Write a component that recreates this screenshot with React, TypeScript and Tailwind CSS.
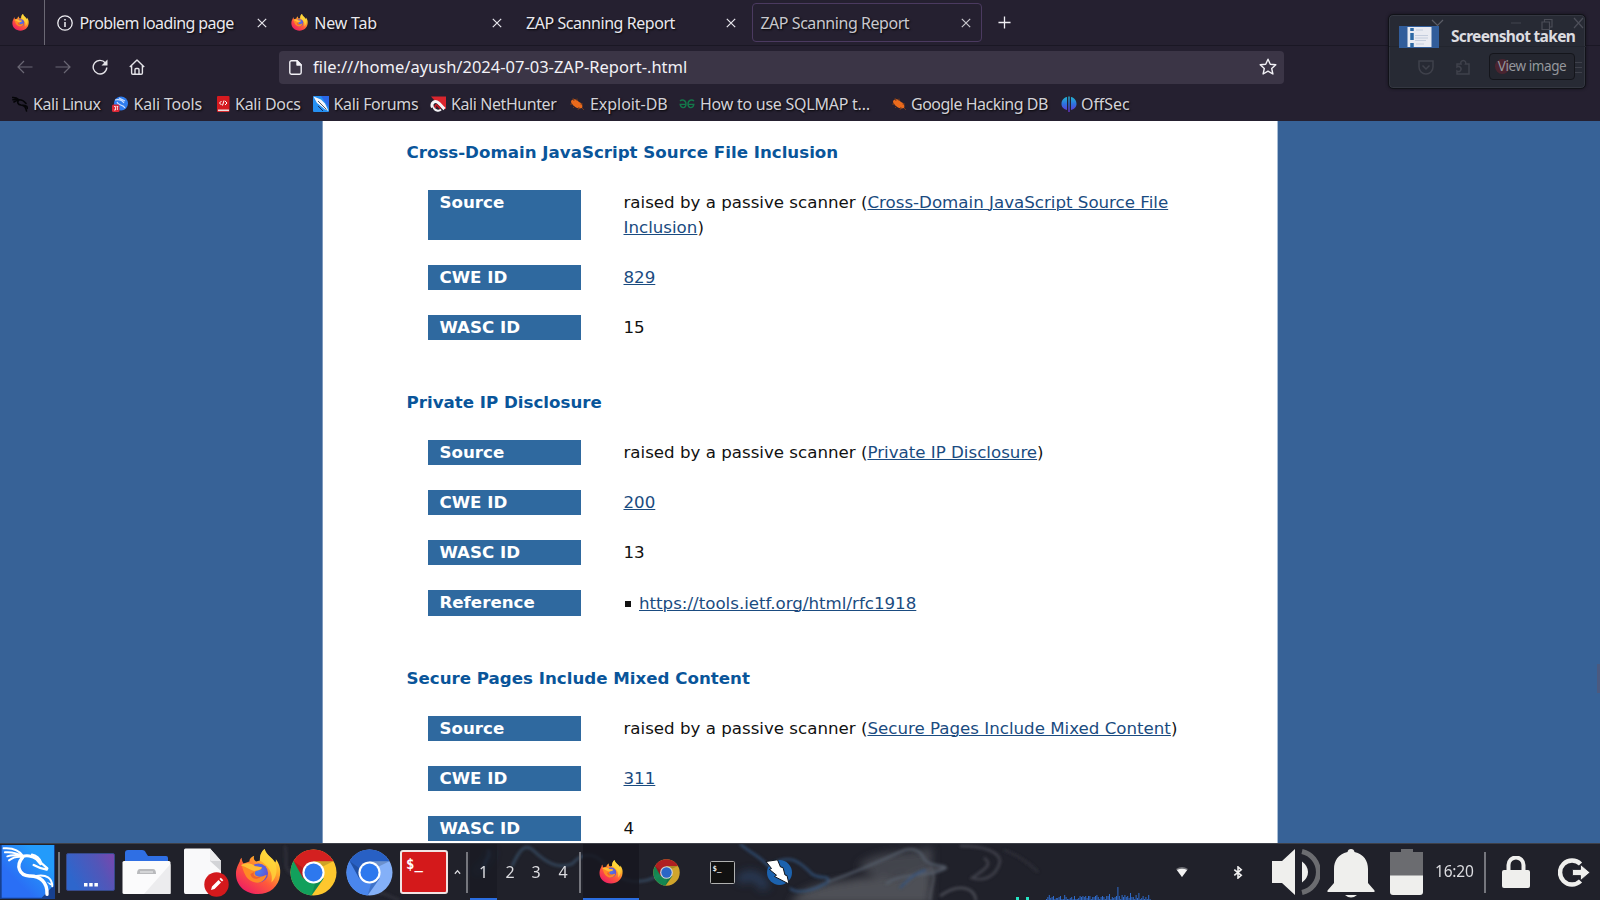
import { ReactNode } from 'react';

function Firefox({ className }: { className: string }) {
  return (
    <svg viewBox="0 0 48 48" className={className}>
      <defs>
        <linearGradient id="ff-body" x1="0.85" y1="0.05" x2="0.2" y2="0.95">
          <stop offset="0" stopColor="#fff04a" />
          <stop offset="0.3" stopColor="#ffae2a" />
          <stop offset="0.6" stopColor="#ff5a3a" />
          <stop offset="1" stopColor="#ee1f63" />
        </linearGradient>
        <radialGradient id="ff-globe" cx="0.5" cy="0.4" r="0.6">
          <stop offset="0" stopColor="#4a7ff0" />
          <stop offset="1" stopColor="#6a48c8" />
        </radialGradient>
      </defs>
      <path d="M7 9 C7 12 8 14 9 15 L15 13 C15 10 17 8 20 7 C19 10 20 12 22 13 L26 12 C26 7 27 3 31 0 C32 6 39 9 42 14 C43 13 43 11 42 10 C46 15 48 20 47 27 C46 39 36 47 24 47 C11 47 1 38 1 26 C1 20 4 15 5 13 C5 11 6 10 7 9 Z" fill="url(#ff-body)" />
      <path d="M26 12 C26 7 27 3 31 0 C32 6 39 9 42 15 C45 22 43 30 38 35 C40 26 36 18 26 12 Z" fill="#ffd93b" opacity="0.75" />
      <circle cx="24.5" cy="25" r="10" fill="url(#ff-globe)" />
      <path d="M7 17 C11 14 17 15 21 18 L28 19 C28 22 24 22 22 23 C19 25 21 29 26 29 C29 29 31 27 33 27 C31 34 24 37 18 34 C11 31 9 24 7 17 Z" fill="#ff8a25" />
      <path d="M6 17 C10 14 17 14 21 18 L28 19 C28 22 22 22 20 23 C16 22 12 19 6 17 Z" fill="#ffbf36" />
      <path d="M20 24 C18 28 22 30 27 29 C22 33 17 31 16 26 Z" fill="#f0622f" />
    </svg>
  );
}

function ChromeLogo({ className, colors }: { className: string; colors: [string, string, string, string] }) {
  const [top, left, right, core] = colors;
  return (
    <svg viewBox="0 0 48 48" className={className}>
      <circle cx="24" cy="24" r="23.5" fill={right} />
      <path d="M24 24 L3.6 12.3 A23.5 23.5 0 0 0 22 47.4 L34.4 30 Z" fill={left} />
      <path d="M24 24 L13.6 30 L3.6 12.3 A23.5 23.5 0 0 1 44.5 12.5 L24 12.5 Z" fill={top} />
      <path d="M24 12.5 H44.4 L34 17.5 Z" fill="#000" opacity="0.18" />
      <path d="M22 47.4 L34.4 30 L26 34 Z" fill="#000" opacity="0.14" />
      <path d="M3.6 12.3 L13.6 30 L14 20 Z" fill="#000" opacity="0.16" />
      <circle cx="24" cy="24" r="11.3" fill="#fff" />
      <circle cx="24" cy="24" r="9.2" fill={core} />
    </svg>
  );
}

function Close({ className }: { className: string }) {
  return (
    <svg viewBox="0 0 10 10" className={className} stroke="currentColor" strokeWidth="1.2" fill="none">
      <path d="M0.8 0.8 L9.2 9.2 M9.2 0.8 L0.8 9.2" />
    </svg>
  );
}

function Tab({ icon, label, labelClass, active }: { icon?: ReactNode; label: string; labelClass: string; active?: boolean }) {
  return (
    <div className={active ? 'mr-1 box-border flex h-[39px] w-[230.3px] items-center rounded-[4px] border border-[#4b3a60] pl-[7px] text-[#c9c8ce]' : 'mr-1 flex h-[39px] w-[230.3px] items-center pl-2 text-[#e9e8ee]'}>
      {icon}
      <span className={labelClass}>{label}</span>
      <Close className={active ? 'ml-auto mr-[10.5px] size-[10px]' : 'ml-auto mr-3 size-[10px]'} />
    </div>
  );
}

function TabStrip() {
  return (
    <div className="flex h-[46px] items-center border-b border-[#1a1724] text-[16px] [text-shadow:1px_1px_2px_rgba(0,0,0,0.9)]">
      <div className="flex h-[45px] w-[45px] items-center justify-center border-r border-[#6b6874] pr-[3px]">
        <Firefox className="size-[17px]" />
      </div>
      <div className="w-1" />
      <Tab
        icon={
          <svg viewBox="0 0 16 16" className="mr-[6.5px] size-4 shrink-0" fill="none" stroke="#f0eff4" strokeWidth="1.3">
            <circle cx="8" cy="8" r="7.2" />
            <path d="M8 7 V12 M8 4 V5.6" strokeWidth="1.5" />
          </svg>
        }
        label="Problem loading page"
        labelClass="tracking-[-0.6px]"
      />
      <Tab icon={<Firefox className="mr-1.5 size-[17px]" />} label="New Tab" labelClass="tracking-[-0.2px]" />
      <Tab label="ZAP Scanning Report" labelClass="ml-[0.5px] tracking-[-0.45px]" />
      <Tab label="ZAP Scanning Report" labelClass="ml-[0.5px] tracking-[-0.45px]" active />
      <svg viewBox="0 0 14 14" className="ml-3 size-[13px]" stroke="#f0eff4" strokeWidth="1.4">
        <path d="M7 0.5 V13.5 M0.5 7 H13.5" />
      </svg>
    </div>
  );
}

function NavBar() {
  return (
    <div className="flex h-[42px] items-center">
      <div className="flex w-[278.5px] items-center pl-[17px] text-[#e4e3e8]">
        <svg viewBox="0 0 16 16" className="size-4 text-[#6a6774]" fill="none" stroke="currentColor" strokeWidth="1.2">
          <path d="M15.5 8 H1 M7 2 L1 8 L7 14" />
        </svg>
        <svg viewBox="0 0 16 16" className="ml-[22px] size-4 text-[#6a6774]" fill="none" stroke="currentColor" strokeWidth="1.2">
          <path d="M0.5 8 H15 M9 2 L15 8 L9 14" />
        </svg>
        <svg viewBox="0 0 16 16" className="ml-[21px] size-4" fill="none" stroke="currentColor" strokeWidth="1.4">
          <path d="M13.4 4 A6.8 6.8 0 1 0 14.8 8.5" />
          <path d="M15.5 0.5 V6.5 H9.5 Z" fill="currentColor" stroke="none" />
        </svg>
        <svg viewBox="0 0 16 16" className="ml-[21px] size-4" fill="none" stroke="currentColor" strokeWidth="1.4" strokeLinejoin="round">
          <path d="M0.8 8 L8 1 L15.2 8 M2.6 6.8 V14 a1.2 1.2 0 0 0 1.2 1.2 H12.2 a1.2 1.2 0 0 0 1.2 -1.2 V6.8" />
          <path d="M6 15 V10.5 a1 1 0 0 1 1 -1 h2 a1 1 0 0 1 1 1 V15" />
        </svg>
      </div>
      <div className="flex h-[33px] w-[1005.5px] items-center rounded-[4px] bg-[#3b3546] pl-[10px] text-[#f2f1f6]">
        <svg viewBox="0 0 13 15" className="h-[15px] w-[13px]" fill="none" stroke="currentColor" strokeWidth="1.4" strokeLinejoin="round">
          <path d="M8 0.8 H2.4 A1.6 1.6 0 0 0 0.8 2.4 V12.6 A1.6 1.6 0 0 0 2.4 14.2 H10.6 A1.6 1.6 0 0 0 12.2 12.6 V5 Z" />
          <path d="M8 0.8 V5 H12.2 Z" fill="currentColor" />
        </svg>
        <span className="ml-[11.5px] text-[16.5px]">file:///home/ayush/2024-07-03-ZAP-Report-.html</span>
        <svg viewBox="0 0 18 18" className="mr-[7px] ml-auto size-[18px]" fill="none" stroke="currentColor" strokeWidth="1.4" strokeLinejoin="round">
          <path d="M9 1.2 L11.3 6.2 L16.8 6.8 L12.7 10.5 L13.9 16 L9 13.2 L4.1 16 L5.3 10.5 L1.2 6.8 L6.7 6.2 Z" />
        </svg>
      </div>
    </div>
  );
}

function Bug() {
  return (
    <svg viewBox="0 0 16 16" className="size-4">
      <path d="M2 5 C4 2 8 3 10 6 C13 7 14 10 13 12 C10 13 7 12 5 10 C3 9 2 7 2 5 Z" fill="#ea6a1c" />
      <path d="M4 2 L5 5 M8 2.5 L8 5 M1 8 L4 8.5 M4 12 L6 10 M9 14 L10 11 M14 8 L11.5 8 M13 12 L15 14" stroke="#7c3c18" strokeWidth="0.9" />
    </svg>
  );
}

function Bookmarks() {
  return (
    <div className="flex h-[33px] items-center pb-px pl-3 text-[16px] text-[#d3d2d8] [text-shadow:1px_1px_2px_rgba(0,0,0,0.9)]">
      <div className="flex w-[100px] items-center gap-[5px]">
        <svg viewBox="0 0 16 16" className="size-4" fill="none" stroke="#050508" strokeWidth="1.6" strokeLinecap="round">
          <path d="M0.5 1.5 C3 1.3 5 2 6.5 3.5 M1 3.8 C3 3.2 5 3.4 6.5 4 M2 6 C4 4.6 5 4.5 6.5 4.2 M6.5 3.8 C10 3.5 12 5 14 7.5 M6.5 4.2 C5 6.5 6 8.5 9 9 C12 9.3 14 11 14.5 15 M11 9.4 C14 9.5 15.5 11 15.6 12.5" />
        </svg>
        <span className="tracking-[-0.46px]">Kali Linux</span>
      </div>
      <div className="flex w-[104px] items-center gap-[5px]">
        <svg viewBox="0 0 16 16" className="size-4">
          <circle cx="9" cy="7.5" r="7" fill="#2f7df0" />
          <path d="M3 4 C7 3 10 4 12 7 M5 6 C6 10 11 8 13 12 M7 2 L13 5" stroke="#cfe2ff" strokeWidth="1.1" fill="none" />
          <rect x="0" y="8.5" width="7.5" height="7.5" rx="1.5" fill="#dc2836" />
          <path d="M2 10.5 H3.5 V14 H2 M5.4 10.5 V14 M4.6 10.5 H6.2" stroke="#fff" strokeWidth="0.8" fill="none" />
        </svg>
        <span className="ml-[0.5px] tracking-[-0.17px]">Kali Tools</span>
      </div>
      <div className="flex w-[97px] items-center gap-[5px]">
        <svg viewBox="0 0 14 16" className="h-4 w-[14px]">
          <rect x="1" y="0" width="12.5" height="16" rx="1" fill="#d61a1f" />
          <rect x="2" y="13.5" width="11" height="1.6" fill="#ecdede" />
          <path d="M5.5 5 L3.5 7 L5.5 9 M9 5 L11 7 L9 9 M8 4.5 L6.5 9.5" stroke="#fff" strokeWidth="1" fill="none" />
        </svg>
        <span className="tracking-[-0.27px]">Kali Docs</span>
      </div>
      <div className="flex w-[117px] items-center gap-[4.5px]">
        <svg viewBox="0 0 16 16" className="size-4">
          <rect width="16" height="16" rx="1" fill="#2590f2" />
          <path d="M8 0 H16 V12 Z" fill="#2a68e8" />
          <path d="M0.5 0.5 L8 3.5 L12 7.5 L15.5 15 L11.5 13 L8.5 10.5 L4 7 Z" fill="#f6f7fa" />
          <path d="M5 5 L13.5 13.5" stroke="#3b4457" strokeWidth="0.9" />
          <path d="M5 10 L10 15" stroke="#14305e" strokeWidth="1" />
        </svg>
        <span className="tracking-[-0.33px]">Kali Forums</span>
      </div>
      <div className="flex w-[139px] items-center gap-[5px]">
        <svg viewBox="0 0 16 16" className="size-4">
          <path d="M1 0.500 H16 V13 L14 13 L5 5 Z" fill="#d9252d" />
          <path d="M2.500 11.500 C0.500 6.500 5 4 8.500 6.800 C10.500 8.500 11.500 10.500 14.500 13" stroke="#f4f4f6" strokeWidth="3" fill="none" />
          <path d="M3.500 11 C4.500 15 9 15.500 11 13.500" stroke="#f4f4f6" strokeWidth="2" fill="none" />
          <path d="M5.500 12 C4.500 9 6 8 8 10 L10.500 12.500" stroke="#c01820" strokeWidth="1.800" fill="none" />
        </svg>
        <span className="tracking-[-0.42px]">Kali NetHunter</span>
      </div>
      <div className="flex w-[110px] items-center gap-[5px]">
        <Bug />
        <span className="tracking-[-0.05px]">Exploit-DB</span>
      </div>
      <div className="flex w-[212px] items-center gap-[5px]">
        <svg viewBox="0 0 16 16" className="size-4" fill="none" stroke="#14774a" strokeWidth="1.4">
          <path d="M1 5 C3 3 7 4 7 8 C7 12.5 2 13 1.2 8.4 H7 M15 5 C13 3 9 4 9 8 C9 12.5 14 13 14.8 8.4 H9" />
        </svg>
        <span className="tracking-[-0.25px]">How to use SQLMAP t…</span>
      </div>
      <div className="flex w-[170px] items-center gap-1">
        <Bug />
        <span className="tracking-[-0.5px]">Google Hacking DB</span>
      </div>
      <div className="flex items-center gap-1">
        <svg viewBox="0 0 16 16" className="size-4">
          <defs>
            <linearGradient id="offsec" x1="0" y1="0" x2="0" y2="1">
              <stop offset="0" stopColor="#22b8cf" />
              <stop offset="0.5" stopColor="#2f6fe0" />
              <stop offset="1" stopColor="#6a2fd0" />
            </linearGradient>
          </defs>
          <path d="M6 1 V14 C2 13 0.5 10.5 0.5 8 C0.5 4 3 1.7 6 1 Z M10 1 V14 C14 13 15.5 10.5 15.5 8 C15.5 4 13 1.7 10 1 Z M7.3 0.5 H8.7 V16 H7.3 Z" fill="url(#offsec)" />
        </svg>
        <span className="tracking-[-0.08px]">OffSec</span>
      </div>
    </div>
  );
}

function Notification() {
  return (
    <div className="absolute top-[13.5px] left-[1387.5px] h-[75px] w-[198.5px] rounded-[5px] border border-[#111218] bg-[#272a34] shadow-[inset_0_0_0_1px_#343741,0_0_3px_#15131c]">
      <svg viewBox="0 0 199 75" className="absolute -top-px -left-px h-[75px] w-[199px]" fill="none" stroke="#3f414b" strokeWidth="1.2">
        <path d="M1 32.500 H198" stroke="#22252e" />
        <path d="M44 6 L49.500 11.500 L55 6" stroke="#5c5e67" />
        <path d="M123 9 H133" />
        <path d="M154 8 H161.500 V15.500 H154 Z M156.500 8 V5.500 H164 V13 H161.500" stroke="#4b4d57" />
        <path d="M186 4 L195 14 M195 4 L186 14" stroke="#4d4f59" />
        <path d="M31 47 H45 V53 A7 7 0 0 1 31 53 Z M34.500 51.500 L38 55 L41.500 51.500" strokeWidth="1.500" />
        <path d="M69 60 H81 V50 H77.500 A2.500 2.500 0 1 0 73 50 H69 V53 A2.500 2.500 0 1 1 69 57 Z" strokeWidth="1.500" />
        <path d="M180 48.500 H194 M180 53.500 H194 M180 58.500 H194" />
      </svg>
      <div className="relative flex items-center gap-3 pt-[9px] pl-[10.5px]">
        <svg viewBox="0 0 40 22" className="mt-[2px] h-[22px] w-10">
          <rect width="40" height="22" fill="#315d9b" />
          <rect x="8.500" y="1" width="24" height="20" fill="#e9ebf2" />
          <path d="M13 2 V5 M13 7 V14 M13 17 V21" stroke="#2d69a5" strokeWidth="3.500" />
          <path d="M17 4 H24 M16 9.500 H29 M16 12 H29 M16 14.500 H27 M17 18 H25" stroke="#c0c9da" strokeWidth="0.900" />
        </svg>
        <span className="text-[15.5px] leading-6 font-bold tracking-[-0.68px] whitespace-nowrap text-[#dcdce0]">Screenshot taken</span>
      </div>
      <div className="relative mt-[5px] ml-[100.5px] flex h-[27px] w-[86px] items-center justify-center rounded-[4px] border border-[#14151b] bg-[#24262f]">
        <svg viewBox="0 0 86 27" className="absolute inset-0 h-full w-full">
          <circle cx="11" cy="13.500" r="8" fill="#4a2430" />
          <circle cx="48" cy="13.500" r="5" fill="#1c2b2d" />
        </svg>
        <span className="relative text-[13.5px] tracking-[-0.42px] text-[#95979d]">View image</span>
      </div>
    </div>
  );
}

type Row = { name: string; value: ReactNode; tall?: boolean };

function Link({ children }: { children: ReactNode }) {
  return <a className="text-[#1a4b80] underline decoration-1 underline-offset-1">{children}</a>;
}

function Section({ title, rows }: { title: string; rows: Row[] }) {
  return (
    <section className="mb-[50px]">
      <h4 className="mb-[25px] ml-[83.5px] h-[25px] font-bold text-[#09559a]">{title}</h4>
      <div className="ml-[105px] flex flex-col gap-[25px]">
        {rows.map((r) => (
          <div key={r.name} className={r.tall ? 'flex min-h-[26px]' : 'flex min-h-[25px]'}>
            <div className="w-[153px] bg-[#2f699f] pl-[11.5px] font-bold text-white">{r.name}</div>
            <div className="ml-[42.5px] w-[570px]">{r.value}</div>
          </div>
        ))}
      </div>
    </section>
  );
}

function Report() {
  return (
    <main className="relative flex h-[722px] justify-center overflow-hidden bg-[#376297] whitespace-normal">
      <div className="h-full w-[956px] border-x border-r-[#a9bed6] border-l-[#7f9bbe] bg-white pt-[19px] font-['DejaVu_Sans',sans-serif] text-[16.667px] leading-[25px] text-[#111]">
        <Section
          title="Cross-Domain JavaScript Source File Inclusion"
          rows={[
            { name: 'Source', value: <>raised by a passive scanner (<Link>Cross-Domain JavaScript Source File Inclusion</Link>)</> },
            { name: 'CWE ID', value: <Link>829</Link> },
            { name: 'WASC ID', value: '15' },
          ]}
        />
        <Section
          title="Private IP Disclosure"
          rows={[
            { name: 'Source', value: <>raised by a passive scanner (<Link>Private IP Disclosure</Link>)</> },
            { name: 'CWE ID', value: <Link>200</Link> },
            { name: 'WASC ID', value: '13' },
            {
              name: 'Reference',
              tall: true,
              value: (
                <div className="flex items-center pt-px">
                  <span className="mr-2 ml-[1.5px] size-[6px] bg-[#111]" />
                  <Link>https://tools.ietf.org/html/rfc1918</Link>
                </div>
              ),
            },
          ]}
        />
        <Section
          title="Secure Pages Include Mixed Content"
          rows={[
            { name: 'Source', value: <>raised by a passive scanner (<Link>Secure Pages Include Mixed Content</Link>)</> },
            { name: 'CWE ID', value: <Link>311</Link> },
            { name: 'WASC ID', value: '4' },
          ]}
        />
      </div>
      <div className="absolute top-[543px] right-0 h-[29px] w-[3px] bg-[#4b5a80]" />
    </main>
  );
}

function Wallpaper() {
  return (
    <svg viewBox="0 0 1600 57" className="absolute inset-0 h-[57px] w-[1600px]" fill="none">
      <defs>
        <filter id="soft" x="-10%" y="-50%" width="120%" height="200%">
          <feGaussianBlur stdDeviation="1.5" />
        </filter>
        <filter id="haze" x="-20%" y="-50%" width="140%" height="200%">
          <feGaussianBlur stdDeviation="4" />
        </filter>
      </defs>
      <g filter="url(#haze)">
        <path d="M790 60 C800 42 830 38 850 36 C870 30 890 38 905 30 L932 22 L930 60 Z" fill="#5b5c63" opacity="0.8" />
        <path d="M858 22 C880 2 915 12 932 2 L932 22 L880 36 Z" fill="#53545c" opacity="0.7" />
        <path d="M740 38 C745 28 760 30 765 45" stroke="#2f5482" strokeWidth="10" opacity="0.5" />
        <path d="M475 30 C482 20 492 16 490 6" stroke="#1f4468" strokeWidth="6" opacity="0.5" />
      </g>
      <g filter="url(#soft)" strokeWidth="2.2">
        <path d="M512 22 C520 5 525 -2 535 8 C550 22 560 24 572 20 C582 8 596 8 606 22 C622 40 640 42 662 30" stroke="#3c5570" opacity="0.9" />
        <path d="M484 28 C482 16 492 14 488 6" stroke="#3b6a9c" opacity="0.6" />
        <path d="M740 0 C752 10 762 14 768 22 C790 8 800 18 812 30 C820 36 830 30 828 38 C812 48 795 50 790 44" stroke="#345c8c" opacity="0.8" />
        <path d="M828 38 C850 30 870 22 900 8 C912 2 920 6 925 16 C932 24 945 20 946 24 C930 34 900 28 886 40" stroke="#56606e" opacity="0.9" />
        <path d="M960 2 C985 2 1000 8 1000 18 C996 32 985 38 972 34 C984 26 994 20 984 14" stroke="#4a4b55" opacity="0.9" />
        <path d="M905 40 C918 26 930 24 946 24 M930 57 C930 42 938 34 930 22 M940 52 C960 38 975 44 976 57" stroke="#5a5c66" opacity="0.8" />
        <path d="M900 44 C908 36 916 28 926 26" stroke="#2c5286" opacity="0.8" />
        <path d="M1004 6 C1020 12 1030 20 1038 28" stroke="#30313a" />
        <path d="M285 2 C288 16 282 24 292 30 M370 50 C385 46 390 54 400 56" stroke="#3a3c46" opacity="0.7" />
      </g>
    </svg>
  );
}

function Divider() {
  return <div className="h-[41px] w-[2px] bg-[#75767d]" />;
}

const spectrum = [1, 3, 5, 2, 3, 4, 1, 2, 2, 3, 4, 1, 1, 5, 3, 1, 1, 2, 3, 1, 4, 1, 1, 2, 4, 3, 4, 3, 4, 2, 4, 4, 1, 3, 3, 4, 5, 3, 1, 3, 4, 3, 1, 4, 4, 6, 1, 3, 2, 3, 4, 13, 4, 1, 5, 3, 5, 3, 4, 2, 7, 3, 3, 1, 5, 2, 7, 1, 2, 4, 1, 3, 1, 5, 1];

function Taskbar() {
  return (
    <footer className="relative flex h-[57px] items-center overflow-hidden border-t border-[#3e4048] bg-[#20212a] font-['Noto_Sans',sans-serif] text-[16px] text-[#dcdce0]">
      <Wallpaper />
      <div className="relative flex h-full w-full items-center">
        <div className="w-[55px]">
          <svg viewBox="0 0 165 162" className="h-[54px] w-[55px]">
            <defs>
              <linearGradient id="tile" x1="0" y1="1" x2="1" y2="0">
                <stop offset="0.3" stopColor="#2a6ff5" />
                <stop offset="0.75" stopColor="#239bfb" />
              </linearGradient>
            </defs>
            <rect width="165" height="162" fill="#17408f" />
            <path d="M5 0 H162 V120 L125 158 H5 Z" fill="url(#tile)" />
            <g fill="none" stroke="#fff" strokeLinecap="round" strokeLinejoin="round">
              <path d="M11 10 C35 8 58 16 70 34 M15 22 C35 20 55 26 70 35 M22 34 C38 29 55 31 68 35 M27 46 C40 36 55 34 68 36" strokeWidth="6" />
              <path d="M66 36 C78 29 98 33 110 42 L122 56" strokeWidth="9" />
              <path d="M96 29 C108 30 120 42 124 54 L142 70 L140 74 C126 72 112 66 101 60" strokeWidth="7" />
              <path d="M68 37 C46 62 58 92 88 93 C120 92 143 112 141 148" strokeWidth="10" />
              <path d="M108 93 C140 88 156 98 157 124" strokeWidth="6" />
            </g>
            <path d="M140 110 L158 118 L151 121 Z" fill="#fff" />
          </svg>
        </div>
        <div className="flex w-2 justify-center"><Divider /></div>
        <div className="flex w-[55px] justify-center">
          <svg viewBox="0 0 49 38" className="h-[38px] w-[49px]">
            <defs>
              <linearGradient id="desk" x1="0" y1="0.4" x2="1" y2="0">
                <stop offset="0" stopColor="#2e66cc" />
                <stop offset="0.6" stopColor="#5356b8" />
                <stop offset="1" stopColor="#7b46ad" />
              </linearGradient>
            </defs>
            <rect x="0.500" y="0.500" width="48" height="37" rx="1.500" fill="url(#desk)" stroke="#364a8c" />
            <path d="M18 30 h3.500 v3.500 h-3.500 Z M23.200 30 h3.500 v3.500 h-3.500 Z M28.400 30 h3.500 v3.500 h-3.500 Z" fill="#fff" />
          </svg>
        </div>
        <div className="flex w-[57px] justify-center">
          <svg viewBox="0 0 49 44" className="mr-px h-[44px] w-[49px]">
            <path d="M3 3 Q3 0 6 0 H20 Q23 0 24 3 L26 6 H44 Q46 6 46 8 V16 H3 Z" fill="#2f6fe4" />
            <rect x="0.500" y="11" width="48" height="33" rx="1.500" fill="#fbfbfc" />
            <path d="M48.500 14 V44 H22 Z" fill="#ececee" />
            <path d="M15 24 Q15 19 18 19 H31 Q34 19 34 24 Z" fill="#b9babd" />
            <path d="M18 22 H31" stroke="#dedee0" strokeWidth="1.500" />
          </svg>
        </div>
        <div className="flex w-[55px] justify-end">
          <svg viewBox="0 0 45 49" className="mt-px mr-px h-[49px] w-[45px]">
            <path d="M1.500 0.500 H26 L37 13 V46 H1.500 Q0 46 0 44 V2 Q0 0.500 1.500 0.500 Z" fill="#f9f9fa" />
            <path d="M26 0.500 L37 13 V23 L26 13 Z" fill="#d3d4d7" />
            <path d="M26 0.500 L37 13 H27 Q26 13 26 11 Z" fill="#ececee" />
            <circle cx="32.500" cy="36.500" r="12.200" fill="#d3191c" />
            <path d="M27 42 L28 38.500 L34.500 32 L37 34.500 L30.500 41 Z M35.500 31 L36.800 29.700 L39.300 32.200 L38 33.500 Z" fill="#fff" />
          </svg>
        </div>
        <div className="flex w-[56px] justify-center"><Firefox className="mr-px size-[46px]" /></div>
        <div className="flex w-[55px] justify-center">
          <ChromeLogo className="size-[47px]" colors={['#d42020', '#12a05c', '#fdc72e', '#2d78ee']} />
        </div>
        <div className="flex w-[56px] justify-center">
          <ChromeLogo className="size-[47px]" colors={['#2860c4', '#4a86ec', '#84b0f8', '#2d78ee']} />
        </div>
        <div className="flex w-[54px] justify-center">
          <div className="flex h-[44px] w-[48px] rounded-[3px] border-2 border-[#f0e4e4] bg-[#d4191b] pt-[3px] pl-[4px]">
            <span className="font-['DejaVu_Sans_Mono',monospace] text-[14px] leading-[18px] font-bold text-white">$_</span>
          </div>
        </div>
        <div className="flex w-[13px] justify-center">
          <svg viewBox="0 0 8 6" className="h-[6px] w-[7px]" fill="none" stroke="#dcdce0" strokeWidth="1.500"><path d="M1 5 L4 1.500 L7 5" /></svg>
        </div>
        <div className="flex w-[6px] justify-center"><Divider /></div>
        <div className="flex h-full w-[27px] items-center justify-center border-b-2 border-[#2a6de0] bg-[#181922]/70 pt-[2px]">1</div>
        <div className="flex w-[26px] justify-center">2</div>
        <div className="flex w-[27px] justify-center pr-px">3</div>
        <div className="flex w-[27px] justify-center pr-px">4</div>
        <div className="flex w-[6px] justify-center"><Divider /></div>
        <div className="flex h-full w-[56px] items-center justify-center border-b-2 border-[#2a6de0] bg-[#16171f]/80 pt-[2px]">
          <Firefox className="size-6" />
        </div>
        <div className="flex w-[55px] justify-center">
          <ChromeLogo className="size-[27px] opacity-80" colors={['#d42020', '#12a05c', '#fdc72e', '#2d78ee']} />
        </div>
        <div className="flex w-[56px] justify-center">
          <div className="flex h-[23px] w-[25px] rounded-[1.5px] border-[1.5px] border-[#b0b1b0] bg-[#111] pt-px pl-[2px]">
            <span className="font-['DejaVu_Sans_Mono',monospace] text-[7.5px] leading-[12px] font-bold text-[#e8e8e8]">$_</span>
          </div>
        </div>
        <div className="flex w-[57px] justify-center">
          <svg viewBox="0 0 27 27" className="mr-px size-[27px]">
            <circle cx="14.500" cy="13.500" r="12.500" fill="#1c62ae" />
            <path d="M1 2.500 L12.500 0.800 L15.500 8 L18 8.500 L20 16 L22 16.500 L24 25 L9.500 17.500 L11.500 16.200 L4.500 10.500 L6.500 9.500 Z" fill="#fff" stroke="#10141c" strokeWidth="1" strokeLinejoin="round" />
          </svg>
        </div>
        <div className="ml-[209px] flex h-full w-[137px] items-end">
          <div className="h-[3px] w-[3px] bg-[#25e6c4]" />
          <div className="ml-[7px] h-[3px] w-[3px] bg-[#25e6c4]" />
          <svg viewBox="0 0 106 14" className="ml-[17px] h-[14px] w-[106px]" fill="#2f6bcb">
            {spectrum.map((v, i) => <rect key={i} x={i * 1.4} y={14 - v} width="1" height={v} />)}
          </svg>
        </div>
        <svg viewBox="0 0 12 12" className="ml-[23px] size-3">
          <path d="M0 3 Q6 -1 12 3 L6 11 Z" fill="#6e6f75" />
          <path d="M0.900 4 Q6 1.500 11.100 4 L6 11 Z" fill="#f2f2f2" />
        </svg>
        <svg viewBox="0 0 10 14" className="ml-[45px] h-[13px] w-[10px]" fill="none" stroke="#f0f0f0" strokeWidth="1.700">
          <path d="M1 4 L8.500 10 L5 13 V1 L8.500 4 L1 10" />
        </svg>
        <svg viewBox="0 0 48 46" className="ml-[29px] h-[46px] w-[48px]">
          <path d="M0 12 H10 L23 0 V46 L10 34 H0 Z" fill="#efefed" />
          <path d="M30 12.500 Q36 17 36 23 Q36 29 30 33.500 Z" fill="#efefed" />
          <path d="M30 2.500 A21 21 0 0 1 30 43.500" fill="none" stroke="#6b6c70" strokeWidth="5" />
        </svg>
        <svg viewBox="0 0 48 49" className="mt-[3px] ml-[7px] h-[49px] w-[48px]" fill="#efefed">
          <path d="M24 0 Q27 0 27.500 3 C37 5 41 12 41 20 V34 L47.500 41.500 V43 H0.500 V41.500 L7 34 V20 C7 12 11 5 20.500 3 Q21 0 24 0 Z" />
          <path d="M18 46 H30 Q24 51 18 46 Z" />
        </svg>
        <svg viewBox="0 0 33 46" className="ml-[15px] h-[46px] w-[33px]">
          <path d="M11 0 H23 V3 H33 V27 H0 V3 H11 Z" fill="#6b6c70" />
          <path d="M0 26.500 H33 V43 Q33 46 30 46 H3 Q0 46 0 43 Z" fill="#efefed" />
        </svg>
        <span className="ml-3 w-[40px] text-[15.5px] tracking-[-0.2px]">16:20</span>
        <div className="ml-[9px]"><Divider /></div>
        <svg viewBox="0 0 28 32" className="ml-4 h-8 w-7">
          <path d="M6.500 15 V9 A7.500 7.500 0 0 1 21.500 9 V15" fill="none" stroke="#efefed" strokeWidth="4" />
          <rect x="0" y="14" width="28" height="18" rx="2" fill="#efefed" />
        </svg>
        <svg viewBox="0 0 32 29" className="ml-[28px] h-[29px] w-8">
          <path d="M22.500 6 A12 12 0 1 0 22.500 23" fill="none" stroke="#efefed" strokeWidth="4.500" />
          <path d="M14.500 11.500 H22.500 V6.500 L32 14.500 L22.500 22.500 V17.500 H14.500 Z" fill="#efefed" stroke="#20212a" strokeWidth="0.800" />
        </svg>
      </div>
    </footer>
  );
}

export default function App() {
  return (
    <div className="relative h-[900px] w-[1600px] overflow-hidden bg-[#252030] font-['Noto_Sans',sans-serif] whitespace-nowrap">
      <header className="h-[121px] bg-[#252030]">
        <TabStrip />
        <NavBar />
        <Bookmarks />
      </header>
      <Report />
      <Taskbar />
      <Notification />
    </div>
  );
}
